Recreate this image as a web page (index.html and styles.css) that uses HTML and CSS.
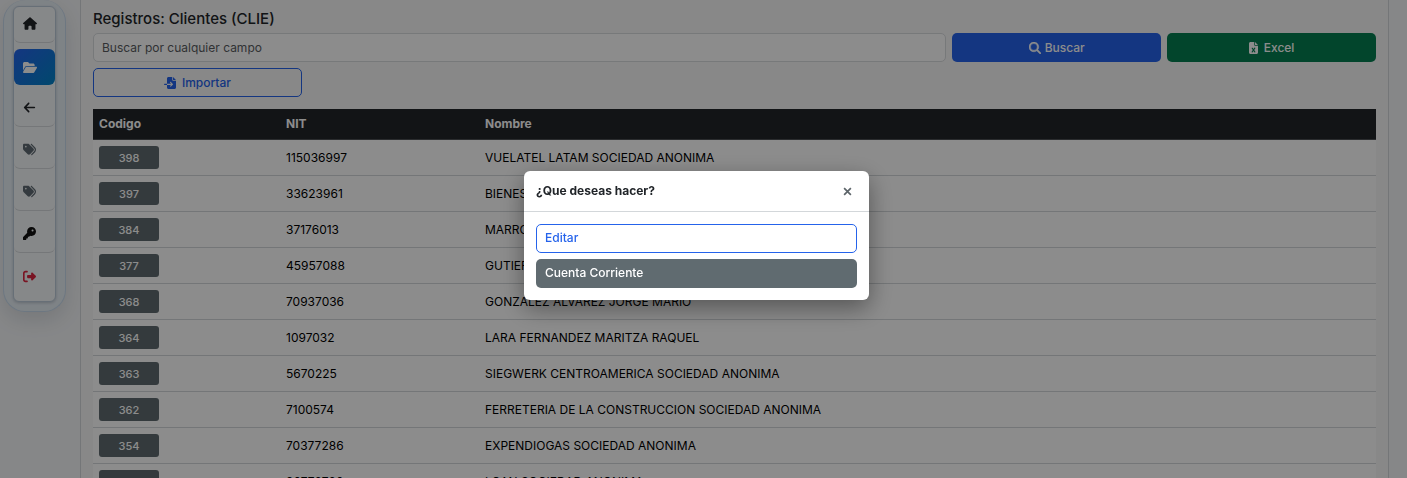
FILE: index.html
```html
<!DOCTYPE html>
<html lang="es">
<head>
    <meta charset="UTF-8">
    <meta name="viewport" content="width=device-width, initial-scale=1.0">
    <title>Registros: Clientes (CLIE)</title>
    <link rel="stylesheet" href="styles.css">
</head>
<body>
    <div class="layout">
        <aside class="sidebar">
            <nav class="menu">
                <a href="#" class="menu-item" aria-label="Inicio">
                    <svg class="icon icon-wide" viewBox="0 0 576 512"><path d="M575.8 255.5c0 18-15 32.1-32 32.1h-32l.7 160.2c0 2.7-.2 5.4-.5 8.1V472c0 22.1-17.9 40-40 40H456c-1.1 0-2.2 0-3.3-.1c-1.4 .1-2.8 .1-4.2 .1H416 392c-22.1 0-40-17.9-40-40V448 384c0-17.7-14.3-32-32-32H256c-17.7 0-32 14.3-32 32v64 24c0 22.1-17.9 40-40 40H160 128.1c-1.5 0-3-.1-4.5-.2c-1.2 .1-2.4 .2-3.6 .2H104c-22.1 0-40-17.9-40-40V360c0-.9 0-1.9 .1-2.8V287.6H32c-18 0-32-14-32-32.1c0-9 3-17 10-24L266.4 8c7-7 15-8 22-8s15 2 21 7L564.8 231.5c8 7 12 15 11 24z"/></svg>
                </a>
                <a href="#" class="menu-item active" aria-label="Registros">
                    <svg class="icon icon-wide" viewBox="0 0 576 512"><path d="M88.7 223.8L0 375.8V96C0 60.7 28.7 32 64 32H181.5c17 0 33.3 6.7 45.3 18.7l26.5 26.5c12 12 28.3 18.7 45.3 18.7H416c35.3 0 64 28.7 64 64v32H144c-22.8 0-43.8 12.1-55.3 31.8zm27.6 16.1C122.1 230 132.6 224 144 224H544c11.5 0 22 6.1 27.7 16.1s5.7 22.2-.1 32.1l-112 192C453.9 474 443.4 480 432 480H32c-11.5 0-22-6.1-27.7-16.1s-5.7-22.2 .1-32.1l112-192z"/></svg>
                </a>
                <a href="#" class="menu-item" aria-label="Regresar">
                    <svg class="icon" viewBox="-32 0 512 512"><path d="M9.4 233.4c-12.5 12.5-12.5 32.8 0 45.3l160 160c12.5 12.5 32.8 12.5 45.3 0s12.5-32.8 0-45.3L109.2 288 416 288c17.7 0 32-14.3 32-32s-14.3-32-32-32l-306.7 0L214.6 118.6c12.5-12.5 12.5-32.8 0-45.3s-32.8-12.5-45.3 0l-160 160z"/></svg>
                </a>
                <a href="#" class="menu-item muted" aria-label="Etiquetas">
                    <svg class="icon" viewBox="0 0 512 512"><path d="M345 39.1L472.8 168.4c52.4 53 52.4 138.2 0 191.2L360.8 472.9c-9.3 9.4-24.5 9.5-33.9 .2s-9.5-24.5-.2-33.9L438.6 325.9c33.9-34.3 33.9-89.4 0-123.7L310.9 72.9c-9.3-9.4-9.2-24.6 .2-33.9s24.6-9.2 33.9 .2zM0 229.5V80C0 53.5 21.5 32 48 32H197.5c17 0 33.3 6.7 45.3 18.7l168 168c25 25 25 65.5 0 90.5L277.3 442.7c-25 25-65.5 25-90.5 0l-168-168C6.7 262.7 0 246.5 0 229.5zM144 144a32 32 0 1 0 -64 0 32 32 0 1 0 64 0z"/></svg>
                </a>
                <a href="#" class="menu-item muted" aria-label="Etiquetas">
                    <svg class="icon" viewBox="0 0 512 512"><path d="M345 39.1L472.8 168.4c52.4 53 52.4 138.2 0 191.2L360.8 472.9c-9.3 9.4-24.5 9.5-33.9 .2s-9.5-24.5-.2-33.9L438.6 325.9c33.9-34.3 33.9-89.4 0-123.7L310.9 72.9c-9.3-9.4-9.2-24.6 .2-33.9s24.6-9.2 33.9 .2zM0 229.5V80C0 53.5 21.5 32 48 32H197.5c17 0 33.3 6.7 45.3 18.7l168 168c25 25 25 65.5 0 90.5L277.3 442.7c-25 25-65.5 25-90.5 0l-168-168C6.7 262.7 0 246.5 0 229.5zM144 144a32 32 0 1 0 -64 0 32 32 0 1 0 64 0z"/></svg>
                </a>
                <a href="#" class="menu-item dark" aria-label="Clave">
                    <svg class="icon" viewBox="0 0 512 512"><path d="M336 352c97.2 0 176-78.8 176-176S433.2 0 336 0S160 78.8 160 176c0 18.7 2.9 36.8 8.3 53.7L7 391c-4.5 4.5-7 10.6-7 17v80c0 13.3 10.7 24 24 24h80c13.3 0 24-10.7 24-24V448h40c13.3 0 24-10.7 24-24V384h40c6.4 0 12.5-2.5 17-7l33.3-33.3c16.9 5.4 35 8.3 53.7 8.3zM376 96a40 40 0 1 1 0 80 40 40 0 1 1 0-80z"/></svg>
                </a>
                <a href="#" class="menu-item logout" aria-label="Salir">
                    <svg class="icon" viewBox="0 0 512 512"><path d="M377.9 105.9L500.7 228.7c7.2 7.2 11.3 17.1 11.3 27.3s-4.1 20.1-11.3 27.3L377.9 406.1c-6.4 6.4-15 9.9-24 9.9c-18.7 0-33.9-15.2-33.9-33.9l0-62.1-128 0c-17.7 0-32-14.3-32-32l0-64c0-17.7 14.3-32 32-32l128 0 0-62.1c0-18.7 15.2-33.9 33.9-33.9c9 0 17.6 3.6 24 9.9zM160 96L96 96c-17.7 0-32 14.3-32 32l0 256c0 17.7 14.3 32 32 32l64 0c17.7 0 32 14.3 32 32s-14.3 32-32 32l-64 0c-53 0-96-43-96-96L0 128C0 75 43 32 96 32l64 0c17.7 0 32 14.3 32 32s-14.3 32-32 32z"/></svg>
                </a>
            </nav>
        </aside>

        <main class="content">
            <h1>Registros: Clientes (CLIE)</h1>

            <form class="toolbar" onsubmit="event.preventDefault();">
                <input type="text" class="search" placeholder="Buscar por cualquier campo" aria-label="Buscar por cualquier campo">
                <button type="submit" class="btn btn-primary">
                    <svg class="icon-btn icon-search" viewBox="0 0 512 512"><path d="M416 208c0 45.9-14.9 88.3-40 122.7L502.6 457.4c12.5 12.5 12.5 32.8 0 45.3s-32.8 12.5-45.3 0L330.7 376c-34.4 25.2-76.8 40-122.7 40C93.1 416 0 322.9 0 208S93.1 0 208 0S416 93.1 416 208zM208 352a144 144 0 1 0 0-288 144 144 0 1 0 0 288z"/></svg>
                    Buscar
                </button>
                <button type="button" class="btn btn-file btn-success">
                    <svg class="icon-btn" viewBox="0 0 384 512"><path d="M64 0C28.7 0 0 28.7 0 64V448c0 35.3 28.7 64 64 64H320c35.3 0 64-28.7 64-64V160H256c-17.7 0-32-14.3-32-32V0H64zM256 0V128H384L256 0zM155.7 250.2L192 302.1l36.3-51.9c7.6-10.9 22.6-13.5 33.4-5.9s13.5 22.6 5.9 33.4L221.3 344l46.4 66.2c7.6 10.9 5 25.8-5.9 33.4s-25.8 5-33.4-5.9L192 385.8l-36.3 51.9c-7.6 10.9-22.6 13.5-33.4 5.9s-13.5-22.6-5.9-33.4L162.7 344l-46.4-66.2c-7.6-10.9-5-25.8 5.9-33.4s25.8-5 33.4 5.9z"/></svg>
                    Excel
                </button>
                <button type="button" class="btn btn-file btn-outline">
                    <svg class="icon-btn" viewBox="0 0 512 512"><path d="M128 64c0-35.3 28.7-64 64-64H352V128c0 17.7 14.3 32 32 32H512V448c0 35.3-28.7 64-64 64H192c-35.3 0-64-28.7-64-64V336H302.1l-39 39c-9.4 9.4-9.4 24.6 0 33.9s24.6 9.4 33.9 0l80-80c9.4-9.4 9.4-24.6 0-33.9l-80-80c-9.4-9.4-24.6-9.4-33.9 0s-9.4 24.6 0 33.9l39 39H128V64zm0 224v48H24c-13.3 0-24-10.7-24-24s10.7-24 24-24H128zM512 128H384V0L512 128z"/></svg>
                    Importar
                </button>
            </form>

            <table class="records">
                <thead>
                    <tr><th class="col-code">Codigo</th><th class="col-nit">NIT</th><th>Nombre</th></tr>
                </thead>
                <tbody>
                    <tr><td><button type="button" class="code">398</button></td><td>115036997</td><td>VUELATEL LATAM SOCIEDAD ANONIMA</td></tr>
                    <tr><td><button type="button" class="code">397</button></td><td>33623961</td><td>BIENES</td></tr>
                    <tr><td><button type="button" class="code">384</button></td><td>37176013</td><td>MARRO</td></tr>
                    <tr><td><button type="button" class="code">377</button></td><td>45957088</td><td>GUTIER</td></tr>
                    <tr><td><button type="button" class="code">368</button></td><td>70937036</td><td>GONZALEZ ALVAREZ JORGE MARIO</td></tr>
                    <tr><td><button type="button" class="code">364</button></td><td>1097032</td><td>LARA FERNANDEZ MARITZA RAQUEL</td></tr>
                    <tr><td><button type="button" class="code">363</button></td><td>5670225</td><td>SIEGWERK CENTROAMERICA SOCIEDAD ANONIMA</td></tr>
                    <tr><td><button type="button" class="code">362</button></td><td>7100574</td><td>FERRETERIA DE LA CONSTRUCCION SOCIEDAD ANONIMA</td></tr>
                    <tr><td><button type="button" class="code">354</button></td><td>70377286</td><td>EXPENDIOGAS SOCIEDAD ANONIMA</td></tr>
                    <tr><td><button type="button" class="code">350</button></td><td>90778780</td><td>LOAN SOCIEDAD ANONIMA</td></tr>
                </tbody>
            </table>
        </main>
    </div>

    <div class="backdrop">
        <div class="modal" role="dialog" aria-modal="true" aria-labelledby="modal-title">
            <div class="modal-header">
                <h2 id="modal-title">¿Que deseas hacer?</h2>
                <button type="button" class="close" aria-label="Cerrar">
                    <svg viewBox="0 0 16 16"><path d="M2 2l12 12M14 2L2 14"/></svg>
                </button>
            </div>
            <div class="modal-body">
                <button type="button" class="btn btn-outline btn-option">Editar</button>
                <button type="button" class="btn btn-secondary btn-option">Cuenta Corriente</button>
            </div>
        </div>
    </div>
</body>
</html>
```
FILE: styles.css
```css
* {
    box-sizing: border-box;
}

body {
    margin: 0;
    height: 100vh;
    overflow: hidden;
    background-color: #f4f6f8;
    font-family: Inter, "Liberation Sans", sans-serif;
    font-size: 12px;
    line-height: 18px;
    color: #212529;
}

button, input {
    font-family: inherit;
    font-size: 12px;
    line-height: 18px;
}

.layout {
    display: flex;
    align-items: flex-start;
    gap: 14px;
    padding: 0 18px 0 3px;
}

/* sidebar */
.sidebar {
    flex: none;
    width: 63px;
    padding: 6px 9px 9px;
    border: 1px solid #c6d9ec;
    border-top: 0;
    border-radius: 22px;
    background-color: #e6eef5;
    box-shadow: 0 8px 20px rgba(15, 23, 42, 0.12);
}

.menu {
    display: flex;
    flex-direction: column;
    gap: 6px;
    border: 1px solid #bccbd9;
    border-radius: 6px;
    background-color: #f5f7f9;
    box-shadow: 0 1px 3px rgba(15, 23, 42, 0.2);
}

.menu-item {
    display: flex;
    align-items: center;
    height: 36px;
    padding: 0 0 2px 9px;
    border-bottom: 1px solid #d5d9dd;
    border-radius: 6px;
    color: #212529;
}

.menu-item.active {
    padding-bottom: 0;
    border-bottom: 0;
    background-image: linear-gradient(135deg, #2563eb, #0284c7);
    color: #fff;
}

.menu-item.muted {
    color: #5f6b73;
}

.menu-item.dark {
    color: #111;
}

.menu-item.logout {
    height: 42px;
    padding-bottom: 8px;
    border-bottom: 0;
    color: #dc2640;
}

.icon {
    width: 13px;
    height: 13px;
    fill: currentColor;
}

.icon-wide {
    width: 14px;
}

/* records */
.content {
    flex: 1;
    min-width: 0;
    padding: 10px 12px 12px;
    border: 1px solid #d3d7da;
    border-top: 0;
    background-color: #f8f8f8;
}

h1 {
    margin: 0 0 5px;
    font-size: 15px;
    line-height: 18px;
    font-weight: 500;
}

.toolbar {
    display: grid;
    grid-template-columns: repeat(12, 1fr);
    gap: 6px;
    margin-bottom: 12px;
}

.search {
    grid-column: span 8;
    width: 100%;
    height: 29px;
    padding: 0 8px;
    border: 1px solid #d9dcdf;
    border-radius: 5px;
    background-color: #fff;
    color: #212529;
}

.search::placeholder {
    color: #595c5f;
    opacity: 1;
}

.btn {
    grid-column: span 2;
    display: flex;
    align-items: center;
    justify-content: center;
    gap: 4px;
    height: 29px;
    padding: 0 8px;
    border: 1px solid transparent;
    border-radius: 5px;
    font-weight: 500;
    cursor: pointer;
}

.btn-file {
    gap: 6px;
}

.btn-primary {
    background-color: #2563eb;
    color: #fff;
}

.btn-success {
    background-color: #047f50;
    color: #fff;
}

.btn-outline {
    border-color: #2563eb;
    background-color: transparent;
    color: #2563eb;
}

.btn-secondary {
    background-color: #606b70;
    color: #fff;
}

.icon-btn {
    height: 12px;
    fill: currentColor;
}

.icon-search {
    stroke: currentColor;
    stroke-width: 20;
}

.records {
    width: 100%;
    table-layout: fixed;
    border-collapse: separate;
    border-spacing: 0;
    background-color: #fff;
    color: #000;
}

.records th {
    height: 31px;
    padding: 0 6px;
    border-bottom: 1px solid #4d5154;
    background-color: #212529;
    color: #fff;
    font-weight: 700;
    text-align: left;
}

.records td {
    height: 36px;
    padding: 0 6px;
    border-bottom: 1px solid #d3d7da;
}

.col-code {
    width: 187px;
}

.col-nit {
    width: 199px;
}

.code {
    display: block;
    width: 60px;
    height: 23px;
    padding: 0;
    border: 0;
    border-radius: 3px;
    background-color: #606b70;
    color: #fff;
    font-size: 11px;
    font-weight: 500;
    cursor: pointer;
}

/* modal */
.backdrop {
    position: fixed;
    inset: 0;
    display: flex;
    align-items: center;
    justify-content: center;
    padding: 0 14px 7px 0;
    background-color: rgba(0, 0, 0, 0.45);
}

.modal {
    width: 345px;
    border-radius: 6px;
    background-color: #fff;
    box-shadow: 0 8px 24px rgba(0, 0, 0, 0.4);
}

.modal-header {
    display: flex;
    align-items: center;
    justify-content: space-between;
    height: 41px;
    padding: 0 12px;
    border-bottom: 1px solid #d3d7da;
}

.modal-header h2 {
    margin: 0;
    font-size: 12px;
    line-height: 18px;
    font-weight: 700;
}

.close {
    display: flex;
    align-items: center;
    justify-content: center;
    width: 20px;
    height: 20px;
    padding: 0;
    border: 0;
    background: none;
    cursor: pointer;
}

.close svg {
    width: 9px;
    height: 9px;
    stroke: #5c6469;
    stroke-width: 3;
}

.modal-body {
    display: flex;
    flex-direction: column;
    gap: 6px;
    padding: 12px;
}

.btn-option {
    justify-content: flex-start;
    padding-bottom: 2px;
}
```
